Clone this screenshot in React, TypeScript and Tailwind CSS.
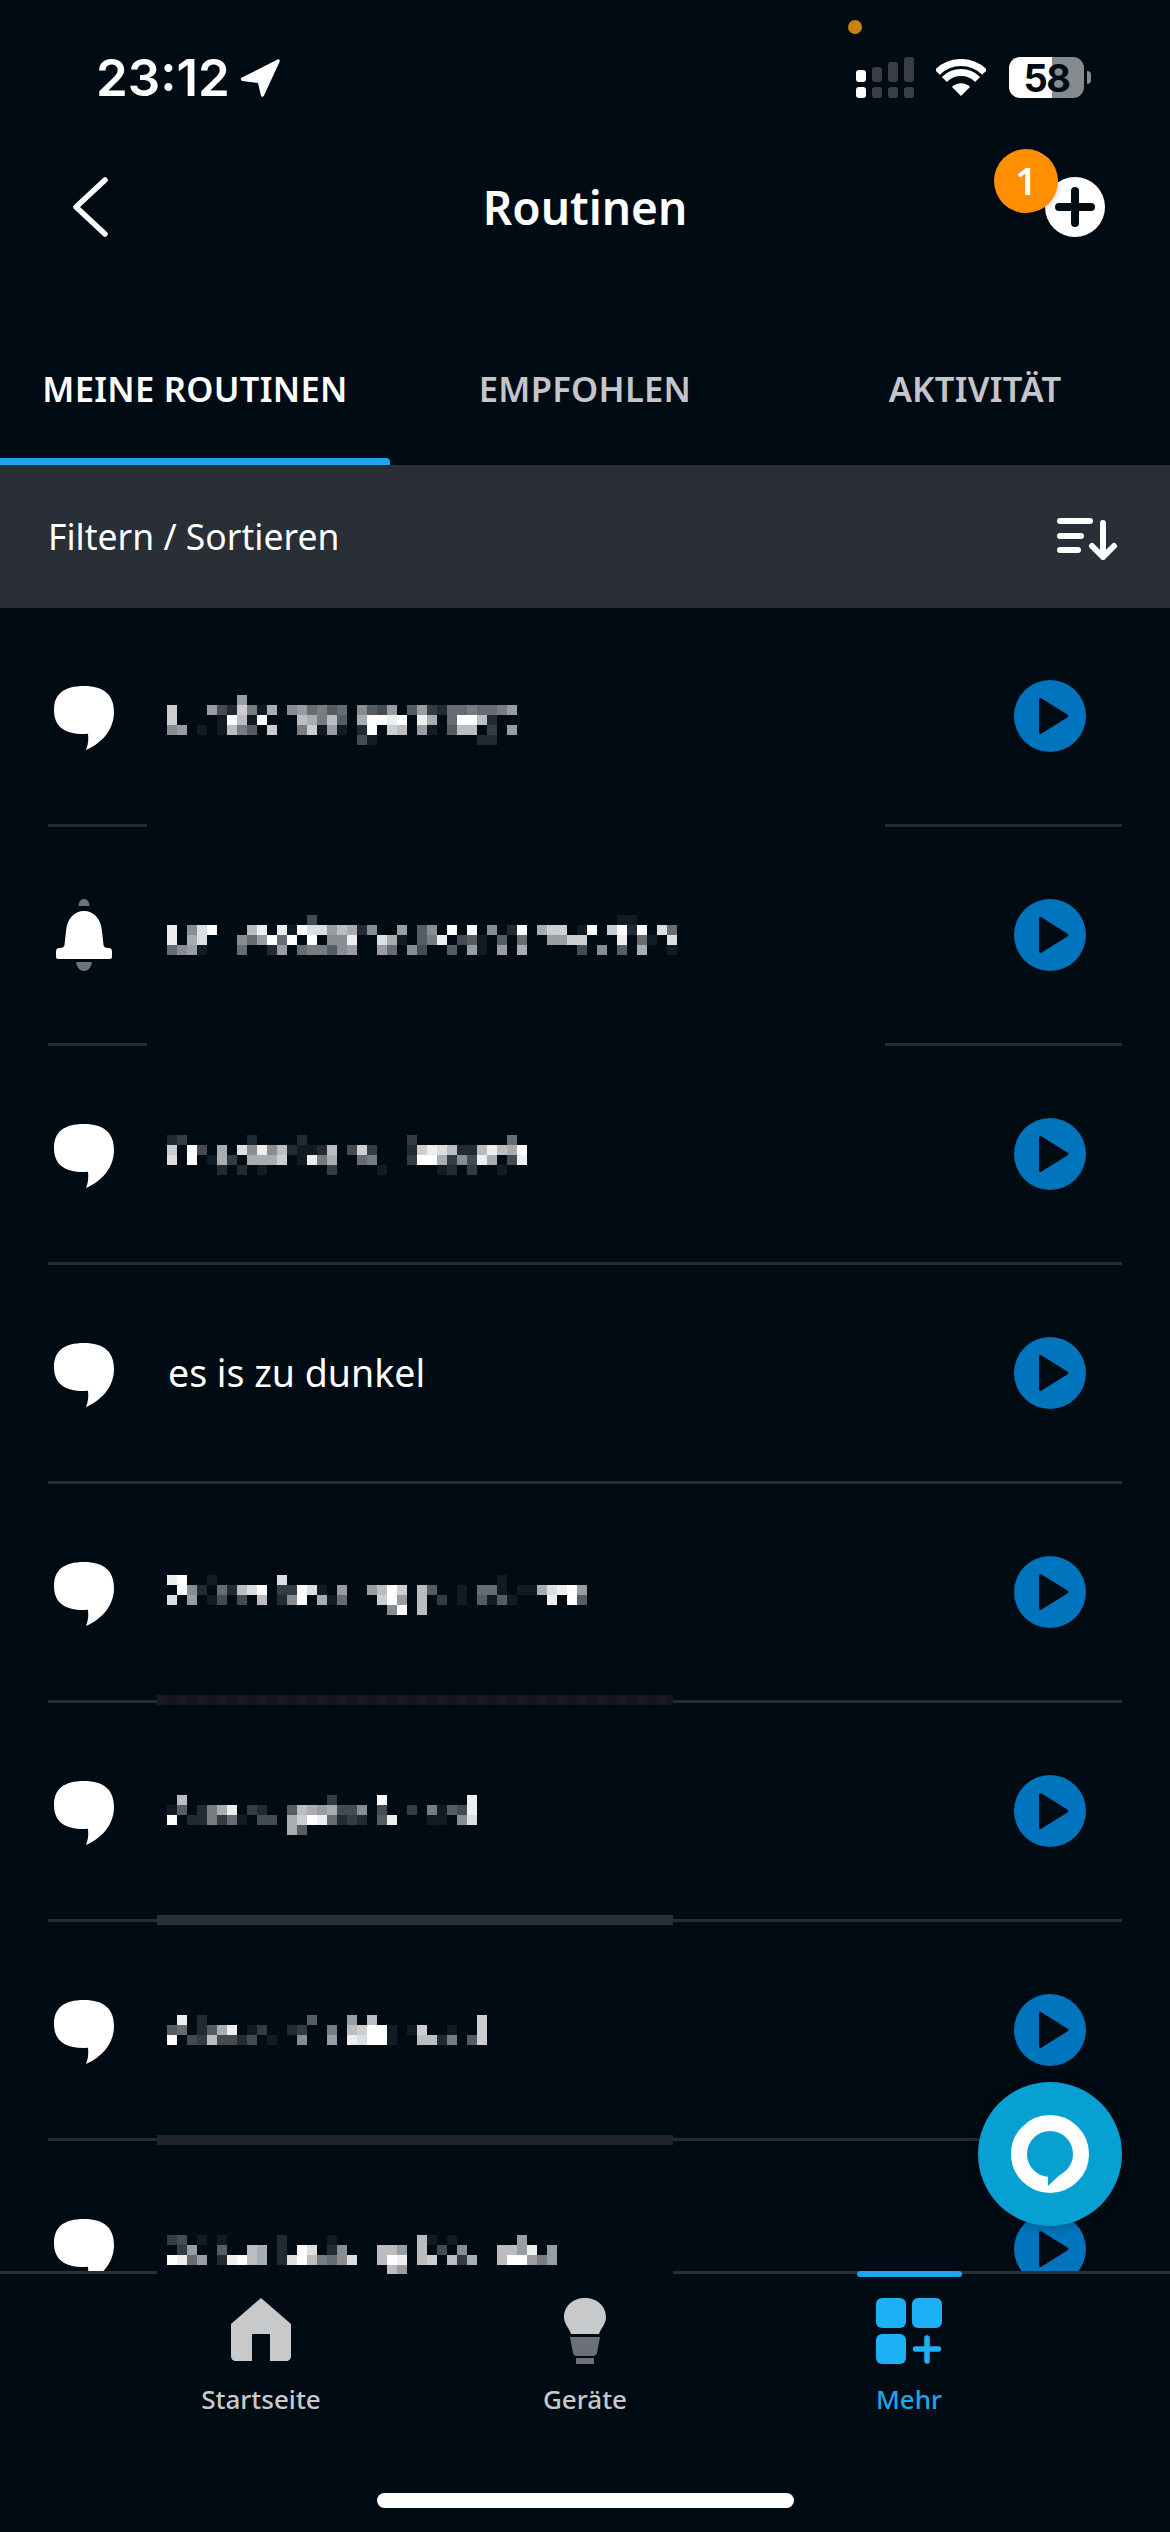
import React from "react";

const font = "font-['Noto_Sans','Liberation_Sans',sans-serif]";

const mosaics: (string[] | null)[] = [
  [
    "0000000900 0000000000 0000000000 00000",
    "c000942c71 a089675608 5490593266 76679",
    "c00001fb1f 000ba7b50a ffef0ea06f fb200",
    "890101b750 c007c19102 f0cb09105b b0309",
    "0000000000 0000000004 1000000000 02200",
  ],
  [
    "0000000000 0000400000 0000000000 0000000000 0000011000",
    "e08df000be 0e1fdd9ba2 80090580f0 f0802f0acc 01f0cf2f0d 6",
    "e0ad000869 f6f0f088e0 0da1057e04 5105060099 cc000e0610 d",
    "6891000600 2906775890 0960840050 91090a0000 0408050a00 1",
  ],
  [
    "2300000020 0002000000 0000300000 000060",
    "c0f40a0d8e 8b2112b04c 30002cedb2 2bebaf",
    "d0f01a30aa ac01e7a006 70003ffa38 4ea04e",
    "0000020201 0000003000 0100000120 300100",
  ],
  null,
  [
    "ef00100000 0d00000000 0000000000 0001000000 00",
    "0f82062bdf 033fd10900 9bfc0b5001 0661011ade f9",
    "d09014040b 028f0a1600 0cf90b0301 05151000e0 f5",
    "0000000000 0000000000 008f0b0000 0000000000 00",
  ],
  [
    "0b00000000 0000003000 0f00000000 e",
    "15027ae032 005ba9a448 0400307154 e",
    "f022736104 40acfe6232 05e0001108 d",
    "0000000000 00a5000000 0000000000 0",
  ],
  [
    "0e02000000 0000500090 b000000000 0c",
    "56025ae013 00230070bc ff101c0010 0c",
    "f043b44240 10080090ed ff100bb270 5c",
  ],
  [
    "3401010000 0200001000 00000b1010 000009000",
    "03900500ba 020fd02800 0bb90b0408 000bb9e09",
    "fe6902efba 02dfb768d0 0bfe0bc0b3 a00bff979",
    "0000000000 0000000000 00b9",
  ],
];

function Mosaic({ rows }: { rows: string[] }) {
  return (
    <div className="flex flex-col">
      {rows.map((row, r) => (
        <div key={r} className="flex h-[10px]">
          {row
            .replace(/ /g, "")
            .split("")
            .map((c, i) => (
              <div
                key={i}
                className="h-[10px] w-[10px] bg-white"
                style={{ opacity: parseInt(c, 16) / 15 }}
              />
            ))}
        </div>
      ))}
    </div>
  );
}

function Bubble() {
  return (
    <svg width="60" height="64" viewBox="0 0 60 64" className="mt-[3px] shrink-0">
      <path
        d="M30 0C50 0 60 9 60 26C60 42 50 56 32 64C34.500 58 34.500 53 34 47.800L30 48C10 48 0 40 0 24C0 8 10 0 30 0Z"
        fill="#fff"
      />
    </svg>
  );
}

function Bell() {
  return (
    <svg width="60" height="72" viewBox="0 0 60 72" className="shrink-0">
      <path d="M24.5 7C25 2 27 0 30 0C33 0 35 2 35.5 7Z" fill="#6f7379" />
      <path
        d="M30 12C40 12 47 20 48 32L49.500 46C50 48 51 49 55 49C57 49 58 50 58 53V58C58 59.500 57 60 55 60H5C3 60 2 59.500 2 58V53C2 50 3 49 5 49C9 49 10 48 10.500 46L12 32C13 20 20 12 30 12Z"
        fill="#fff"
      />
      <path d="M22 63H38C37 69 34 72 30 72C26 72 23 69 22 63Z" fill="#6f7379" />
    </svg>
  );
}

function Play() {
  return (
    <div className="flex h-[72px] w-[72px] shrink-0 items-center justify-center rounded-full bg-[#0074bd]">
      <svg width="72" height="72" viewBox="0 0 72 72">
        <path
          d="M26.500 19.500L53 36L26.500 52.500Z"
          fill="#010b14"
          stroke="#010b14"
          strokeWidth="3"
          strokeLinejoin="round"
        />
      </svg>
    </div>
  );
}

function Row({ index }: { index: number }) {
  const m = mosaics[index];
  return (
    <div className="shrink-0">
      <div className="flex h-[216px] items-center pl-[54px] pr-[84px]">
        {index === 1 ? <Bell /> : <Bubble />}
        <div className="ml-[53px] flex h-full min-w-0 flex-1 flex-col">
          {m ? (
            <div style={{ marginTop: 87 + index }}>
              <Mosaic rows={m} />
            </div>
          ) : (
            <div className={`ml-[1px] mt-[83px] text-[37.5px] leading-[50px] text-white ${font}`}>es is zu dunkel</div>
          )}
        </div>
        <Play />
      </div>
      <div className="relative mx-[48px] h-[3px] bg-[#262a31]">
        {(index === 0 || index === 1) && (
          <div className="absolute left-[99px] top-0 h-[3px] w-[738px] bg-[#010b14]" />
        )}
        {index === 4 && (
          <div className="absolute left-[109px] top-[-5px] h-[10px] w-[516px] bg-[repeating-linear-gradient(90deg,#181c22_0_10px,#13171d_10px_20px)]" />
        )}
        {index === 5 && <div className="absolute left-[109px] top-[-4px] h-[10px] w-[516px] bg-[#2a2e36]" />}
        {index === 6 && <div className="absolute left-[109px] top-[-3px] h-[10px] w-[516px] bg-[#20242c]" />}
      </div>
    </div>
  );
}

function StatusBar() {
  return (
    <div className="relative flex h-[130px] items-start pl-[96px] pr-[79px] pt-[57px]">
      <div className="absolute left-[848px] top-[20px] h-[14px] w-[14px] rounded-full bg-[#c9820c]" />
      <span className="font-['Inter',sans-serif] text-[51px] font-semibold leading-[41px] text-white">
        23:12
      </span>
      <svg width="40" height="40" viewBox="0 0 40 40" className="ml-[10px] mt-[1px]">
        <path
          d="M37.500 1.500C39 0.800 40 2 39.700 3.500L24 37.500C23 39.500 21 39 20.800 37L18 25L2.500 23C0.500 22.700 0.300 20.500 2 19.500Z"
          fill="#fff"
        />
      </svg>
      <div className="ml-auto flex items-start">
        <svg width="58" height="41" viewBox="0 0 58 41">
          <rect x="0" y="13" width="10" height="12" rx="3" fill="#fff" />
          <rect x="0" y="30" width="10" height="11" rx="3" fill="#fff" />
          <rect x="16" y="10" width="10" height="15" rx="3" fill="#3a3e44" />
          <rect x="16" y="30" width="10" height="11" rx="3" fill="#3a3e44" />
          <rect x="32" y="5" width="10" height="20" rx="3" fill="#3a3e44" />
          <rect x="32" y="30" width="10" height="11" rx="3" fill="#3a3e44" />
          <rect x="48" y="0" width="10" height="25" rx="3" fill="#3a3e44" />
          <rect x="48" y="30" width="10" height="11" rx="3" fill="#3a3e44" />
        </svg>
        <svg width="50" height="37" viewBox="0 0 50 37" className="ml-[22px] mt-[2px]">
          <path d="M1.300 13.300A33.500 33.500 0 0 1 48.700 13.300" fill="none" stroke="#fff" strokeWidth="7" />
          <path d="M8.400 20.400A23.500 23.500 0 0 1 41.600 20.400" fill="none" stroke="#fff" strokeWidth="7" />
          <path d="M16 28C21 23 29 23 34 28L25 37Z" fill="#fff" />
        </svg>
        <div className="ml-[23px] flex items-center">
          <div className="flex h-[41px] w-[75px] items-center justify-center rounded-[11px] bg-[linear-gradient(90deg,#fff_57%,#858a8e_57%)] font-['Inter',sans-serif] text-[38px] font-bold leading-none tracking-[-1.5px] text-[#010b14]">
            58
          </div>
          <div className="ml-[3px] h-[13px] w-[4px] rounded-r-full bg-[#858a8e]" />
        </div>
      </div>
    </div>
  );
}

function Header() {
  return (
    <div className="relative flex h-[155px] items-center justify-center">
      <svg width="40" height="66" viewBox="0 0 40 66" className="absolute left-[70px] top-[44px]">
        <path d="M35 6L6 33L35 60" fill="none" stroke="#fff" strokeWidth="5.500" strokeLinecap="round" strokeLinejoin="round" />
      </svg>
      <span className={`text-[46px] font-semibold leading-[56px] text-white ${font}`}>Routinen</span>
      <div className="absolute left-[1045px] top-[47px] flex h-[60px] w-[60px] items-center justify-center rounded-full bg-white">
        <svg width="40" height="40" viewBox="0 0 40 40">
          <path d="M20 4V36M4 20H36" stroke="#010b14" strokeWidth="8" strokeLinecap="round" />
        </svg>
      </div>
      <div className={`absolute left-[994px] top-[19px] flex h-[64px] w-[64px] items-center justify-center rounded-full bg-[#ff8f00] text-[38px] font-semibold text-white shadow-[0_0_6px_rgba(0,0,0,0.25)] ${font}`}>
        1
      </div>
    </div>
  );
}

function Tabs() {
  const tabs = ["MEINE ROUTINEN", "EMPFOHLEN", "AKTIVITÄT"];
  return (
    <div className="grid h-[180px] grid-cols-3">
      {tabs.map((t, i) => (
        <div key={t} className="flex flex-col items-center">
          <div
            className={`mt-[82px] flex-1 text-[34.5px] font-semibold leading-[44px] tracking-[0.3px] ${font} ${i === 0 ? "text-white" : "text-[#c4c6c9]"}`}
          >
            {t}
          </div>
          {i === 0 && <div className="h-[7px] w-full rounded-tr-[4px] bg-[#1ca7ec]" />}
        </div>
      ))}
    </div>
  );
}

function FilterBar() {
  return (
    <div className="flex h-[144px] items-center justify-between bg-[#2a2e36] pl-[48px] pr-[52px]">
      <span className={`text-[35.5px] leading-[46px] text-white ${font}`}>Filtern / Sortieren</span>
      <svg width="61" height="44" viewBox="0 0 61 44" className="mt-[5px]">
        <g stroke="#fff" strokeWidth="6" strokeLinecap="round" fill="none">
          <path d="M3 4H33M3 19H24M3 33H21" />
          <path d="M46 6V40M35 29L46 40L57 29" strokeLinejoin="round" />
        </g>
      </svg>
    </div>
  );
}

function NavBar() {
  return (
    <div className="relative mt-[-3px] flex h-[261px] flex-col">
      <div className="flex h-[3px]">
        <div className="w-[157px] bg-[#2a2e36]" />
        <div className="w-[516px]" />
        <div className="flex-1 bg-[#2a2e36]" />
      </div>
      <div className="absolute left-[857px] top-0 h-[6px] w-[105px] rounded-full bg-[#1ca7ec]" />
      <div className="mt-[24px] grid grid-cols-3 px-[99px]">
        <div className="flex flex-col items-center">
          <svg width="60" height="69" viewBox="0 0 60 69">
            <path
              d="M30 0L60 26V58C60 61 58 63 55 63H39V36H21V63H5C2 63 0 61 0 58V26Z"
              fill="#c8c9cb"
            />
          </svg>
          <span className={`mt-[14px] text-[26px] font-medium leading-[36px] text-[#c8c9cb] ${font}`}>Startseite</span>
        </div>
        <div className="flex flex-col items-center">
          <svg width="60" height="69" viewBox="0 0 60 69">
            <path d="M30 0C42 0 51 8 51 19C51 26 46 30 44 36H16C14 30 9 26 9 19C9 8 18 0 30 0Z" fill="#c8c9cb" />
            <path d="M15 39H45L42 55C41.500 57 40 58 38 58H22C20 58 18.500 57 18 55Z" fill="#6c7178" />
            <path d="M21 60H39V66H21Z" fill="#6c7178" />
          </svg>
          <span className={`mt-[14px] text-[26px] font-medium leading-[36px] text-[#c8c9cb] ${font}`}>Geräte</span>
        </div>
        <div className="flex flex-col items-center">
          <svg width="66" height="69" viewBox="0 0 66 69">
            <rect x="0" y="0" width="30" height="30" rx="6" fill="#1cb0f6" />
            <rect x="36" y="0" width="30" height="30" rx="6" fill="#1cb0f6" />
            <rect x="0" y="36" width="30" height="30" rx="6" fill="#1cb0f6" />
            <path d="M51 40V63M39.500 51H62.500" stroke="#1cb0f6" strokeWidth="5.500" strokeLinecap="round" />
          </svg>
          <span className={`mt-[14px] text-[26px] font-medium leading-[36px] text-[#1ca7ec] ${font}`}>Mehr</span>
        </div>
      </div>
      <div className="mb-[24px] mt-auto flex justify-center">
        <div className="h-[15px] w-[417px] rounded-full bg-white" />
      </div>
    </div>
  );
}

function AlexaButton() {
  return (
    <div className="absolute left-[978px] top-[2082px] flex h-[144px] w-[144px] items-center justify-center rounded-full bg-[#06a0d3] shadow-[0_0_12px_rgba(0,0,0,0.3)]">
      <svg width="78" height="78" viewBox="0 0 78 78">
        <circle cx="39" cy="39" r="31" fill="none" stroke="#fff" strokeWidth="16" />
        <path d="M37 58L37 71L53 56Z" fill="#06a0d3" />
      </svg>
    </div>
  );
}

export default function App() {
  return (
    <div className="relative flex h-[2532px] w-[1170px] flex-col overflow-hidden bg-[#010b14]">
      <StatusBar />
      <Header />
      <Tabs />
      <FilterBar />
      <div className="h-[1668px] overflow-hidden">
        {mosaics.map((_, i) => (
          <Row key={i} index={i} />
        ))}
      </div>
      <NavBar />
      <AlexaButton />
    </div>
  );
}
